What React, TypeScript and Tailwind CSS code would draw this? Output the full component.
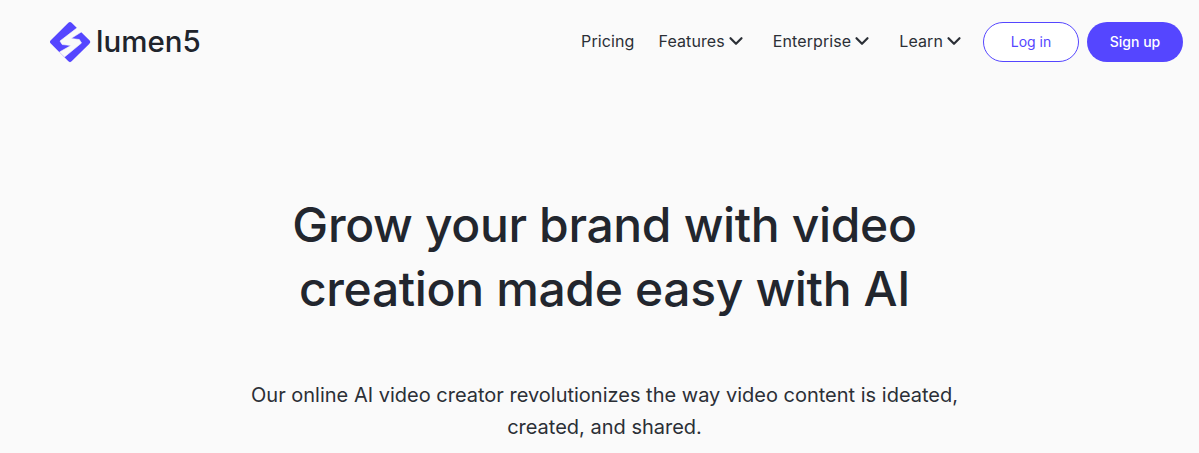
import { ChevronDown } from "lucide-react";

function Logo() {
  return (
    <svg width="42" height="42" viewBox="0 0 42 42" fill="none" xmlns="http://www.w3.org/2000/svg">
      <path
        d="M21 3.5 38.8 21 21 38.7 3.4 21Z"
        fill="#5546FF"
        stroke="#5546FF"
        strokeWidth="4.6"
        strokeLinejoin="round"
      />
      <path
        d="M28.5 6.6 32.6 10.8 22 17.5 30.3 18.5 32.5 22 15.5 36 10.5 31 22 24.5 13.2 23.5 11 20Z"
        fill="#FAFAFA"
        stroke="#FAFAFA"
        strokeWidth="0.6"
        strokeLinejoin="round"
      />
    </svg>
  );
}

function NavItem({ label, menu }: { label: string; menu?: boolean }) {
  return (
    <a className="flex items-center text-base leading-6 tracking-[0.1px] text-[#2b2f36]">
      {label}
      {menu && <ChevronDown size={22} strokeWidth={2.4} className="mr-[2px] text-[#2b2f36]" />}
    </a>
  );
}

export default function App() {
  return (
    <div className="h-[453px] w-[1199px] overflow-hidden bg-[#fafafa] font-['Inter',sans-serif]">
      <header className="flex h-[84px] items-center justify-between pl-[49px] pr-4">
        <div className="flex items-center gap-[5px]">
          <Logo />
          <span className="text-[29.5px] font-medium leading-none text-[#20242c]">lumen5</span>
        </div>
        <nav className="flex items-center">
          <div className="flex items-center gap-6 pb-[2px] pr-4">
            <NavItem label="Pricing" />
            <NavItem label="Features" menu />
            <NavItem label="Enterprise" menu />
            <NavItem label="Learn" menu />
          </div>
          <div className="flex items-center gap-2">
            <button className="h-10 w-24 rounded-[20px] border border-[#5546ff] bg-white text-sm text-[#5546ff]">
              Log in
            </button>
            <button className="h-10 w-24 rounded-[20px] bg-[#5546ff] text-sm font-medium text-white">
              Sign up
            </button>
          </div>
        </nav>
      </header>
      <main className="flex flex-col items-center pl-[10px] pt-[109px] text-center">
        <h1 className="text-[48px] font-medium leading-16 tracking-[-0.35px] text-[#22262e]">
          Grow your brand with video
          <br />
          creation made easy with AI
        </h1>
        <p className="mt-[58px] w-[760px] text-xl leading-8 text-[#2b2f36]">
          Our online AI video creator revolutionizes the way video content is ideated, created, and shared.
        </p>
      </main>
    </div>
  );
}
